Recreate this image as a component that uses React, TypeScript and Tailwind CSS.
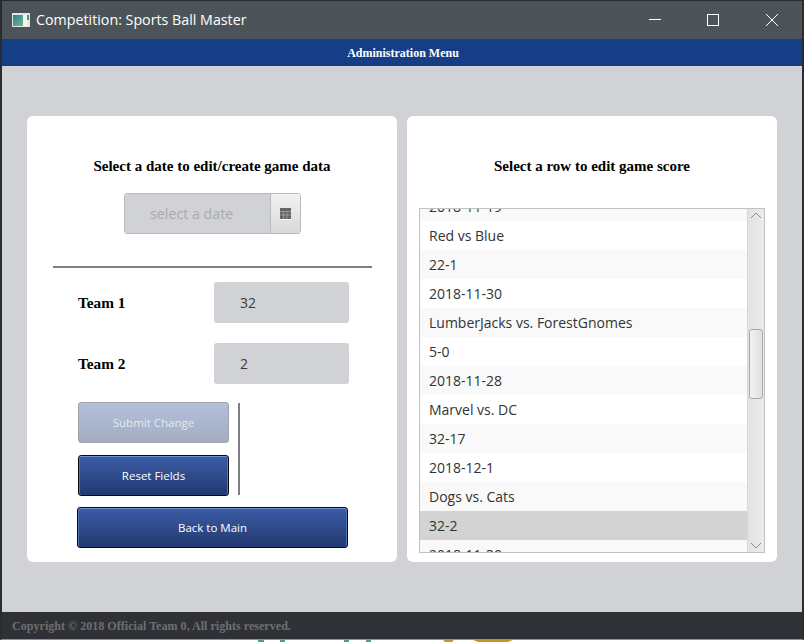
const rows = [
  '2018-11-19',
  'Red vs Blue',
  '22-1',
  '2018-11-30',
  'LumberJacks vs. ForestGnomes',
  '5-0',
  '2018-11-28',
  'Marvel vs. DC',
  '32-17',
  '2018-12-1',
  'Dogs vs. Cats',
  '32-2',
  '2018-11-30',
];

function TitleBar() {
  return (
    <div className="flex h-[38px] shrink-0 items-center bg-[#4d5459] pl-[10px] text-white">
      <svg width="18" height="14" viewBox="0 0 18 14" className="mr-[6px]">
        <defs>
          <linearGradient id="appIcon" x1="0" y1="0" x2="1" y2="1">
            <stop offset="0" stopColor="#2f7f9a" />
            <stop offset="1" stopColor="#6fb98a" />
          </linearGradient>
        </defs>
        <rect width="18" height="14" fill="#e6e8e8" />
        <rect x="1" y="2" width="10" height="11" fill="url(#appIcon)" />
        <rect x="11" y="2" width="4" height="11" fill="#f4f6f6" />
        <rect x="15" y="2" width="2" height="5" fill="#5f8f7c" />
      </svg>
      <span className="font-['Open_Sans',sans-serif] text-[14.25px] leading-none">
        Competition: Sports Ball Master
      </span>
      <div className="ml-auto flex items-center">
        <svg width="14" height="14" viewBox="0 0 14 14" className="mr-[44px]">
          <path d="M1 6.5H13" stroke="#fff" strokeWidth="1" />
        </svg>
        <svg width="14" height="14" viewBox="0 0 14 14" className="mr-[45px]">
          <rect x="1.5" y="1.5" width="11" height="11" fill="none" stroke="#fff" strokeWidth="1" />
        </svg>
        <svg width="14" height="14" viewBox="0 0 14 14" className="mr-[23px]">
          <path d="M1 1L13 13M13 1L1 13" stroke="#fff" strokeWidth="1" />
        </svg>
      </div>
    </div>
  );
}

function BlueButton({ label, disabled, wide }: { label: string; disabled?: boolean; wide?: boolean }) {
  return (
    <button
      className={[
        "flex h-[41px] items-center justify-center rounded-[3px] border font-['Open_Sans',sans-serif] text-[11.5px]",
        wide ? 'w-[271px]' : 'w-[151px]',
        disabled
          ? 'border-[#a0a3a8] bg-gradient-to-b from-[#b3c0de] to-[#a4adc0] text-[#e6e9f2]'
          : 'border-[#050a14] bg-gradient-to-b from-[#3c5ca8] to-[#223a70] text-white shadow-[inset_0_1px_0_#6d93d0,inset_1px_0_0_#4f74b8,inset_-1px_0_0_#4f74b8]',
      ].join(' ')}
    >
      {label}
    </button>
  );
}

function TeamRow({ label, value }: { label: string; value: string }) {
  return (
    <div className="flex h-[41px] items-center pl-[51px]">
      <span className="w-[136px] pt-[2px] font-['Liberation_Serif',serif] text-[15.3px] font-bold text-black">
        {label}
      </span>
      <div className="flex h-[41px] w-[135px] items-center rounded-[3px] bg-[#d1d2d6] pl-[26px] font-['Open_Sans',sans-serif] text-[14px] text-[#3a3a3a]">
        {value}
      </div>
    </div>
  );
}

function LeftCard() {
  return (
    <div className="flex h-[446px] w-[370px] flex-col rounded-[6px] bg-white">
      <div className="mt-[41px] h-[18px] text-center font-['Liberation_Serif',serif] text-[15px] leading-[18px] font-bold text-black">
        Select a date to edit/create game data
      </div>
      <div className="mt-[18px] ml-[97px] flex h-[41px] w-[177px] overflow-hidden rounded-[3px] border border-[#b9babc]">
        <div className="flex w-[145px] items-center bg-[#d1d2d6] pl-[25px] font-['Open_Sans',sans-serif] text-[14.25px] text-[#a9aaad]">
          select a date
        </div>
        <div className="flex flex-1 items-center justify-center border-l border-[#b9babc] bg-gradient-to-b from-[#f2f2f2] to-[#d9d9d9]">
          <svg width="11" height="12" viewBox="0 0 11 12">
            <rect width="11" height="11" fill="#666" />
            <rect y="11" width="11" height="1" fill="#fff" />
            <path d="M0 3.5H11M0 7H11M3.5 3V11M7 3V11" stroke="#a8a8a8" strokeWidth="0.7" />
          </svg>
        </div>
      </div>
      <div className="mt-[32px] ml-[26px] h-[2px] w-[319px] bg-[#808080]" />
      <div className="mt-[14px] flex flex-col gap-[20px]">
        <TeamRow label="Team 1" value="32" />
        <TeamRow label="Team 2" value="2" />
      </div>
      <div className="mt-[18px] ml-[51px] flex">
        <div className="flex flex-col gap-[12px]">
          <BlueButton label="Submit Change" disabled />
          <BlueButton label="Reset Fields" />
        </div>
        <div className="mt-px ml-[9px] h-[92px] w-[2px] bg-[#808080]" />
      </div>
      <div className="mt-[11px] ml-[50px]">
        <BlueButton label="Back to Main" wide />
      </div>
    </div>
  );
}

function GameList() {
  return (
    <div className="relative ml-[12px] h-[345px] w-[346px] overflow-hidden border border-[#c2c2c2]">
      <div className="mr-[17px] -mt-[17px] font-['Open_Sans',sans-serif] text-[14px] text-[#333]">
        {rows.map((row, i) => (
          <div
            key={i}
            className={[
              'flex h-[29px] items-center pl-[9px]',
              i === 11 ? 'bg-[#d3d3d3]' : i % 2 === 0 ? 'bg-[#f9f9f9]' : 'bg-white',
            ].join(' ')}
          >
            {row}
          </div>
        ))}
      </div>
      <div className="absolute top-0 right-0 bottom-0 w-[17px] border-l border-[#d8d8d8] bg-gradient-to-r from-[#e2e2e2] to-[#ececec]">
        <svg width="12" height="7" viewBox="0 0 12 7" className="absolute top-[3px] left-[2px]">
          <path d="M1 6L6 1L11 6" fill="none" stroke="#8a8a8a" strokeWidth="1" />
        </svg>
        <div className="absolute top-[120px] left-[1px] h-[70px] w-[14px] rounded-[3px] border border-[#a8a8a8] bg-gradient-to-r from-[#f2f2f2] to-[#e0e0e0]" />
        <svg width="12" height="7" viewBox="0 0 12 7" className="absolute bottom-[3px] left-[2px]">
          <path d="M1 1L6 6L11 1" fill="none" stroke="#8a8a8a" strokeWidth="1" />
        </svg>
      </div>
    </div>
  );
}

function RightCard() {
  return (
    <div className="flex h-[446px] w-[370px] flex-col rounded-[6px] bg-white">
      <div className="mt-[41px] h-[18px] text-center font-['Liberation_Serif',serif] text-[15px] leading-[18px] font-bold text-black">
        Select a row to edit game score
      </div>
      <div className="mt-[33px]">
        <GameList />
      </div>
    </div>
  );
}

export default function App() {
  return (
    <div className="flex h-[642px] w-[804px] flex-col overflow-hidden bg-white">
      <div className="flex h-[640px] shrink-0 flex-col border-x-2 border-t border-b border-[#2a2d30] border-b-[#8d9094]">
        <TitleBar />
        <div className="flex h-[27px] shrink-0 items-center justify-center bg-[#153e87] pl-[2px] font-['Liberation_Serif',serif] text-[12px] font-bold text-white">
          Administration Menu
        </div>
        <div className="flex flex-1 gap-[10px] bg-[#d1d2d6] pt-[50px] pl-[25px]">
          <LeftCard />
          <RightCard />
        </div>
        <div className="flex h-[27px] shrink-0 items-center bg-[#2f3136] pt-[2px] pl-[10px] font-['Liberation_Serif',serif] text-[12.1px] font-bold text-[#6d6f72]">
          Copyright © 2018 Official Team 0, All rights reserved.
        </div>
      </div>
      {/* bit of the desktop wallpaper showing under the window */}
      <svg width="804" height="2" viewBox="0 0 804 2" className="shrink-0">
        <path d="M258 0H264V2H258ZM280 0H285V2H280ZM344 0H349V2H344ZM366 0H371V2H366Z" fill="#4f9a9e" />
        <path d="M443 0H454L452 2H445ZM473 0H513L508 2H478Z" fill="#c09a2e" />
      </svg>
    </div>
  );
}
